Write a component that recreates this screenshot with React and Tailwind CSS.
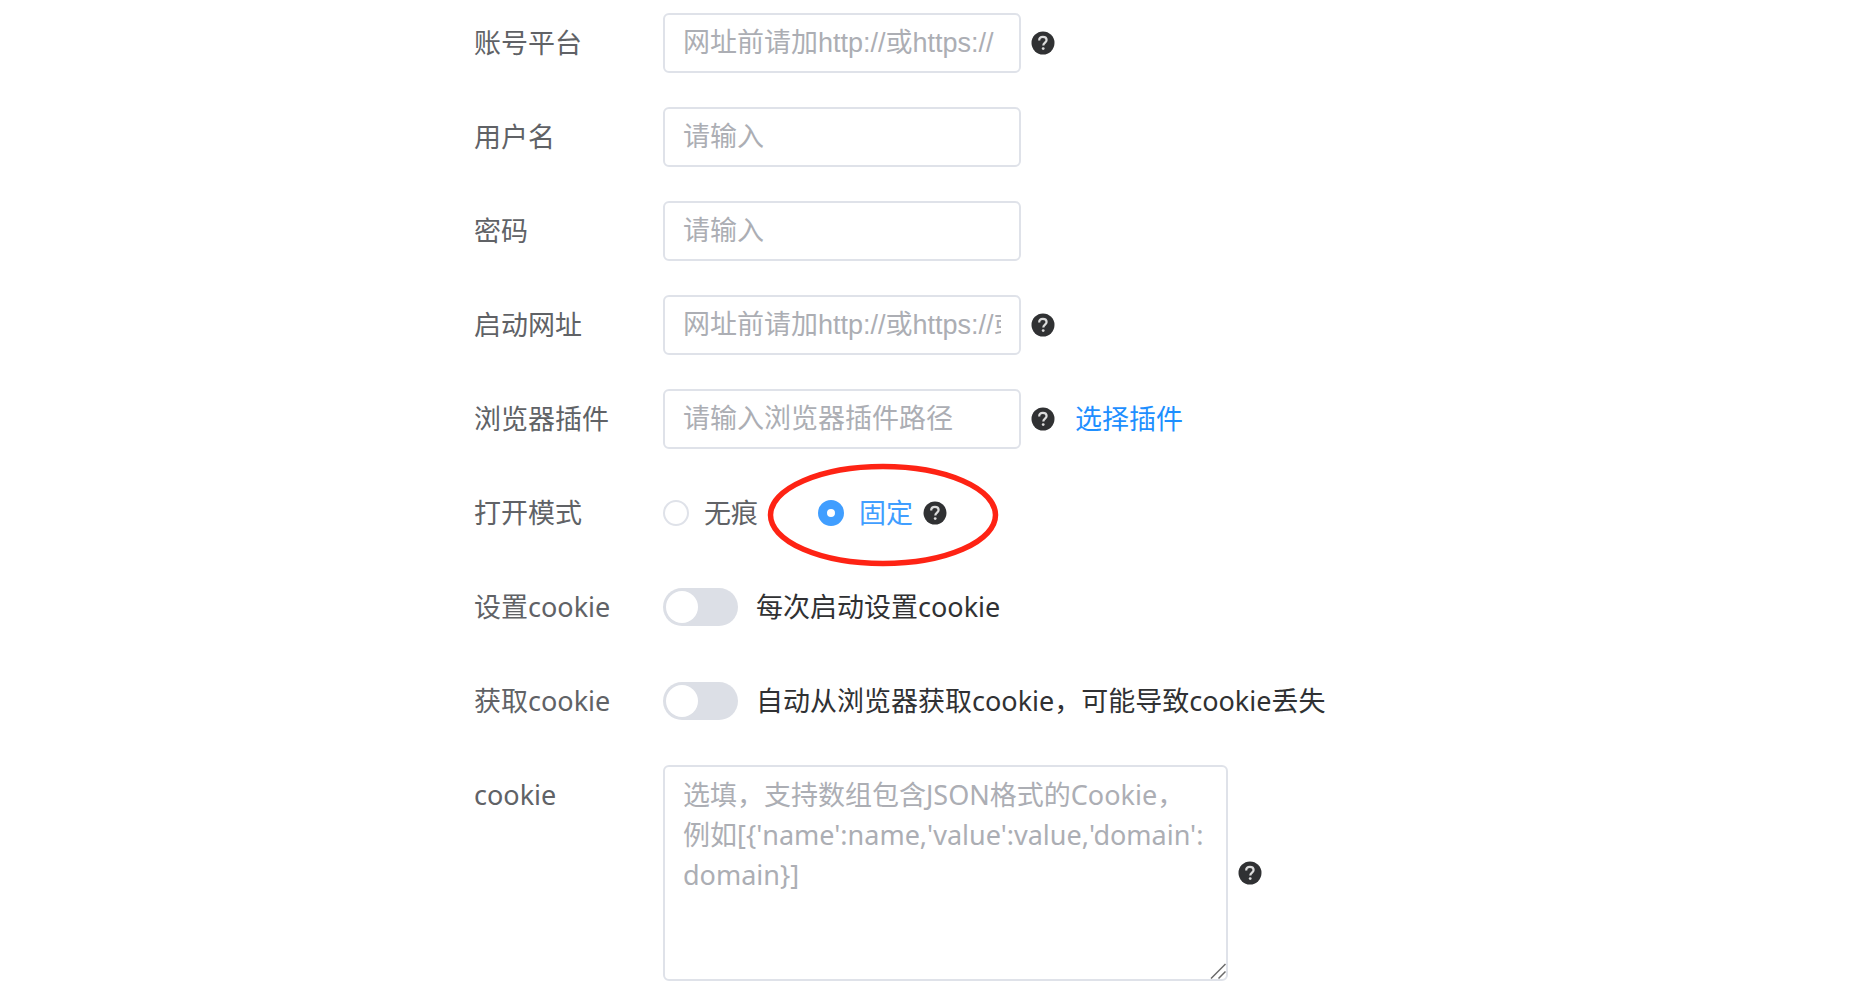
import { useState } from "react";

const HelpIcon = () => (
  <svg viewBox="0 0 24 24" className="size-6 shrink-0" aria-hidden="true">
    <circle cx="12" cy="12" r="11.5" fill="#303133" />
    <path
      d="M8.2 9.4c0-2.200 1.600-3.500 3.700-3.500s3.700 1.300 3.700 3.200c0 2.500-3.300 2.700-3.300 5.500"
      fill="none"
      stroke="#dcdcdc"
      strokeWidth="2.200"
    />
    <circle cx="12.200" cy="17.600" r="1.400" fill="#dcdcdc" />
  </svg>
);

const Row = ({ label, htmlFor, children }) => (
  <div className="flex items-start">
    <label htmlFor={htmlFor} className="w-[189px] shrink-0 leading-[60px] text-[#606266]">
      {label}
    </label>
    <div className="flex min-h-[60px] items-center">{children}</div>
  </div>
);

const TextInput = ({ id, type = "text", placeholder }) => (
  <input
    id={id}
    type={type}
    placeholder={placeholder}
    className="h-[60px] w-[358px] rounded-md border-2 border-[#dfe2e9] bg-white px-[18px] font-['Liberation_Sans','Noto_Sans_CJK_SC',sans-serif] text-[#606266] outline-none placeholder:text-[#acaeb4]"
  />
);

const Radio = ({ value, label, mode, setMode }) => {
  const active = mode === value;

  return (
    <label
      className={`flex items-center gap-[15px] ${
        active ? "text-[#409eff]" : "text-[#606266]"
      }`}
    >
      <input
        type="radio"
        name="mode"
        value={value}
        checked={active}
        onChange={() => setMode(value)}
        className="size-[26px] appearance-none rounded-full border-2 border-[#dfe2e9] bg-white checked:border-9 checked:border-[#409eff]"
      />
      {label}
    </label>
  );
};

const Switch = ({ id, text }) => (
  <div className="flex items-center gap-[18px]">
    <input
      id={id}
      type="checkbox"
      role="switch"
      className="h-[38px] w-[75px] appearance-none rounded-full bg-[#dcdfe6] p-[3px] before:block before:size-8 before:rounded-full before:bg-white checked:bg-[#409eff] checked:before:ml-auto"
    />
    <span className="text-[#303133]">{text}</span>
  </div>
);

const cookiePlaceholder =
  "选填，支持数组包含JSON格式的Cookie，\n例如[{'name':name,'value':value,'domain':\ndomain}]";

const App = () => {
  const [mode, setMode] = useState("fixed");

  return (
    <form className="ml-[474px] flex flex-col gap-[34px] pt-[13px] font-['Noto_Sans','Noto_Sans_CJK_SC',sans-serif] text-[27px]">
      <Row label="账号平台" htmlFor="platform">
        <TextInput id="platform" placeholder="网址前请加http://或https://" />
        <span className="ml-[10px]">
          <HelpIcon />
        </span>
      </Row>

      <Row label="用户名" htmlFor="username">
        <TextInput id="username" placeholder="请输入" />
      </Row>

      <Row label="密码" htmlFor="password">
        <TextInput id="password" type="password" placeholder="请输入" />
      </Row>

      <Row label="启动网址" htmlFor="startUrl">
        <TextInput
          id="startUrl"
          placeholder="网址前请加http://或https://或file://"
        />
        <span className="ml-[10px]">
          <HelpIcon />
        </span>
      </Row>

      <Row label="浏览器插件" htmlFor="plugin">
        <TextInput id="plugin" placeholder="请输入浏览器插件路径" />
        <span className="ml-[10px]">
          <HelpIcon />
        </span>
        <a href="#plugins" className="ml-5 text-[#1e8fff]">
          选择插件
        </a>
      </Row>

      <Row label="打开模式">
        <Radio value="private" label="无痕" mode={mode} setMode={setMode} />
        <div className="relative ml-[60px] flex items-center gap-[10px]">
          <Radio value="fixed" label="固定" mode={mode} setMode={setMode} />
          <HelpIcon />
          {/* Red highlight ring */}
          <svg
            viewBox="0 0 232 108"
            className="pointer-events-none absolute top-1/2 left-1/2 h-[108px] w-[232px] -translate-1/2"
            aria-hidden="true"
          >
            <ellipse
              cx="116"
              cy="56"
              rx="112.5"
              ry="48.5"
              fill="none"
              stroke="#fe2314"
              strokeWidth="5.5"
            />
          </svg>
        </div>
      </Row>

      <Row label="设置cookie" htmlFor="setCookie">
        <Switch id="setCookie" text="每次启动设置cookie" />
      </Row>

      <Row label="获取cookie" htmlFor="getCookie">
        <Switch id="getCookie" text="自动从浏览器获取cookie，可能导致cookie丢失" />
      </Row>

      <Row label="cookie" htmlFor="cookie">
        <div className="relative">
          <textarea
            id="cookie"
            placeholder={cookiePlaceholder}
            className="block h-[216px] w-[565px] rounded-md border-2 border-[#dfe2e9] bg-white px-[18px] py-2 leading-10 text-[#606266] outline-none placeholder:text-[#acaeb4] [&::-webkit-resizer]:bg-transparent"
          />
          {/* Resize grip */}
          <svg
            viewBox="0 0 16 16"
            className="pointer-events-none absolute right-0.5 bottom-0.5 size-4"
            aria-hidden="true"
          >
            <path d="M1 15.500 15.500 1M8.500 15.500l7-7" stroke="#6b6b6b" strokeWidth="1.500" />
          </svg>
        </div>
        <span className="ml-[10px]">
          <HelpIcon />
        </span>
      </Row>
    </form>
  );
};

export default App;
